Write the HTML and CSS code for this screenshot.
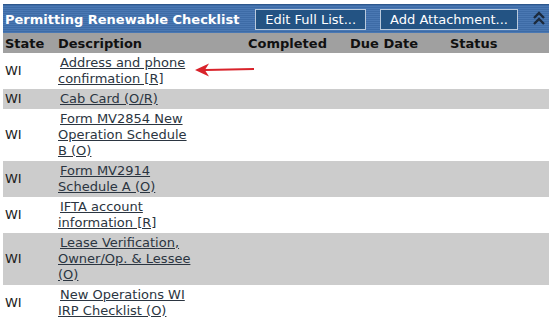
FILE: index.html
```html
<!DOCTYPE html>
<html lang="en">
<head>
    <meta charset="UTF-8">
    <title>Permitting Renewable Checklist</title>
    <link rel="stylesheet" href="styles.css">
</head>
<body>
    <div class="panel">
        <div class="panel-bar">
            <span class="panel-title">Permitting Renewable Checklist</span>
            <div class="bar-actions">
                <button class="bar-btn">Edit Full List...</button>
                <button class="bar-btn">Add Attachment...</button>
                <span class="collapse">
                    <svg width="14" height="16" viewBox="0 0 14 16">
                        <polyline points="2,7 7,2 12,7" fill="none" stroke="#1c2a3c" stroke-width="2.4"/>
                        <polyline points="2,13 7,8 12,13" fill="none" stroke="#1c2a3c" stroke-width="2.4"/>
                    </svg>
                </span>
            </div>
        </div>

        <table class="checklist">
            <colgroup>
                <col class="col-state">
                <col class="col-desc">
                <col class="col-done">
                <col class="col-due">
                <col>
            </colgroup>
            <thead>
                <tr>
                    <th>State</th>
                    <th>Description</th>
                    <th>Completed</th>
                    <th>Due Date</th>
                    <th>Status</th>
                </tr>
            </thead>
            <tbody>
                <tr>
                    <td>WI</td>
                    <td class="desc"><a href="#">Address and phone confirmation [R]</a>
                        <svg class="pointer" width="62" height="14" viewBox="0 0 62 14">
                            <path d="M1,7 L15,0.5 L11.5,6 L60,5 L60,7 L11.5,8 L15,13.5 Z" fill="#d9232b"/>
                        </svg>
                    </td>
                    <td></td><td></td><td></td>
                </tr>
                <tr>
                    <td>WI</td>
                    <td class="desc"><a href="#">Cab Card (O/R)</a></td>
                    <td></td><td></td><td></td>
                </tr>
                <tr>
                    <td>WI</td>
                    <td class="desc"><a href="#">Form MV2854 New Operation Schedule B (O)</a></td>
                    <td></td><td></td><td></td>
                </tr>
                <tr>
                    <td>WI</td>
                    <td class="desc"><a href="#">Form MV2914 Schedule A (O)</a></td>
                    <td></td><td></td><td></td>
                </tr>
                <tr>
                    <td>WI</td>
                    <td class="desc"><a href="#">IFTA account information [R]</a></td>
                    <td></td><td></td><td></td>
                </tr>
                <tr>
                    <td>WI</td>
                    <td class="desc"><a href="#">Lease Verification, Owner/Op. &amp; Lessee (O)</a></td>
                    <td></td><td></td><td></td>
                </tr>
                <tr>
                    <td>WI</td>
                    <td class="desc"><a href="#">New Operations WI IRP Checklist (O)</a></td>
                    <td></td><td></td><td></td>
                </tr>
            </tbody>
        </table>
    </div>
</body>
</html>
```

FILE: styles.css
```css
body {
    margin: 0;
    padding: 4px 1px 0 3px;
    font-family: "DejaVu Sans", Verdana, sans-serif;
    font-size: 13px;
    color: #222;
    background: #fff;
}

/* Blue title bar */
.panel-bar {
    display: flex;
    align-items: center;
    justify-content: space-between;
    height: 29px;
    padding: 0 0 0 2px;
    background: repeating-linear-gradient(180deg, #3d6ba6 0px, #3d6ba6 1px, #4a78b3 1px, #4a78b3 2px);
    border-top: 1px solid #2d578c;
    box-sizing: border-box;
}

.panel-title {
    color: #fff;
    font-weight: bold;
    font-size: 13px;
}

.bar-actions {
    display: flex;
    align-items: center;
    gap: 14px;
}

.bar-btn {
    height: 21px;
    padding: 0 9px;
    font-family: "DejaVu Sans", Verdana, sans-serif;
    font-size: 13px;
    color: #fff;
    background: #235383;
    border: 1px solid #b9c9dc;
    border-radius: 0;
}

.collapse {
    display: flex;
    width: 20px;
    justify-content: center;
    margin-left: -3px;
}

/* Checklist table */
.checklist {
    width: 100%;
    border-collapse: collapse;
    border-bottom: 2px solid #cccccc;
}

.col-state { width: 53px; }
.col-desc { width: 190px; }
.col-done { width: 102px; }
.col-due { width: 100px; }

.checklist th {
    background: #a0a0a0;
    color: #111;
    font-weight: bold;
    text-align: left;
    padding: 2px 2px 1px;
    line-height: 17px;
}

.checklist td {
    padding: 2px 2px;
    line-height: 16px;
    vertical-align: middle;
}

.checklist tbody tr:nth-child(even) td {
    background: #cccccc;
}

.desc {
    position: relative;
}

.desc a {
    display: inline-block;
    width: 136px;
    text-indent: 2px;
    color: #2b3541;
    text-decoration: underline;
}

.pointer {
    position: absolute;
    left: 138px;
    top: 10px;
}
```
